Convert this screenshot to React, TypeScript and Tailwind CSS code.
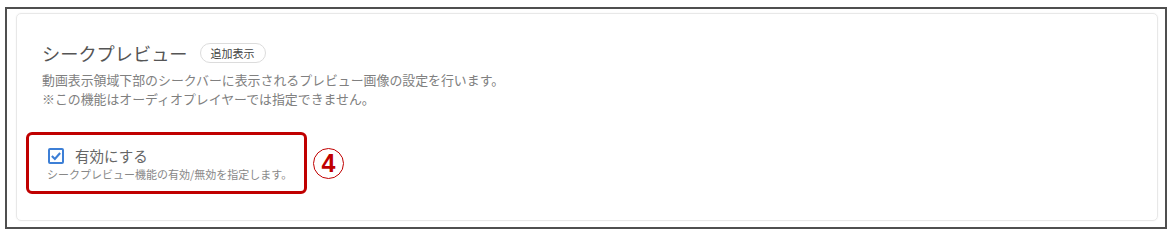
export default function App() {
  return (
    <div className="w-[1174px] h-[236px] bg-white pt-[7px] pl-[5px] font-['Noto_Sans_CJK_JP','Noto_Sans',sans-serif]">
      <div className="w-[1162px] h-[222px] border-2 border-[#4f4f4f] pt-[4px] pl-[9px] pr-[7px] pb-[6px]">
        <div className="h-full rounded-[5px] border border-[#e8e8e8] shadow-[0_0_2px_rgba(0,0,0,0.06)] pl-[25px] pt-[26px]">
          {/* title */}
          <div className="flex items-center h-[26px]">
            <span className="text-[18.2px] leading-[26px] text-[#555]">シークプレビュー</span>
            <span className="ml-[12px] h-[20px] px-[10px] rounded-full border border-[#dcdcdc] text-[11px] leading-[18px] text-[#444]">
              追加表示
            </span>
          </div>
          <div className="mt-[4px] text-[12.9px] leading-[19px] text-[#808080]">
            <p>動画表示領域下部のシークバーに表示されるプレビュー画像の設定を行います。</p>
            <p>※この機能はオーディオプレイヤーでは指定できません。</p>
          </div>

          {/* enable */}
          <div className="flex items-center mt-[24px] -ml-[16px]">
            <div className="w-[281px] h-[62px] border-[3px] border-[#c00000] rounded-[6px] pl-[19px] pt-[11px]">
              <label className="flex items-center h-[20px]">
                <span className="flex items-center justify-center w-[16px] h-[16px] border-2 border-[#3d7fd6] rounded-[2px] bg-white">
                  <svg viewBox="0 0 16 16" className="w-[12px] h-[12px]">
                    <polyline points="2.5,8 6.5,12 13.5,4" fill="none" stroke="#3d7fd6" strokeWidth="2.8" />
                  </svg>
                </span>
                <span className="ml-[11px] text-[14.5px] leading-[20px] text-[#666]">有効にする</span>
              </label>
              <p className="mt-[1px] -ml-[1px] text-[11px] leading-[14px] text-[#888]">
                シークプレビュー機能の有効/無効を指定します。
              </p>
            </div>
            <span className="ml-[6px] flex items-center justify-center w-[31px] h-[31px] rounded-full border-[1.5px] border-[#c00000] text-[25px] leading-none font-bold text-[#c00000] font-['Liberation_Sans',sans-serif]">
              4
            </span>
          </div>
        </div>
      </div>
    </div>
  )
}
